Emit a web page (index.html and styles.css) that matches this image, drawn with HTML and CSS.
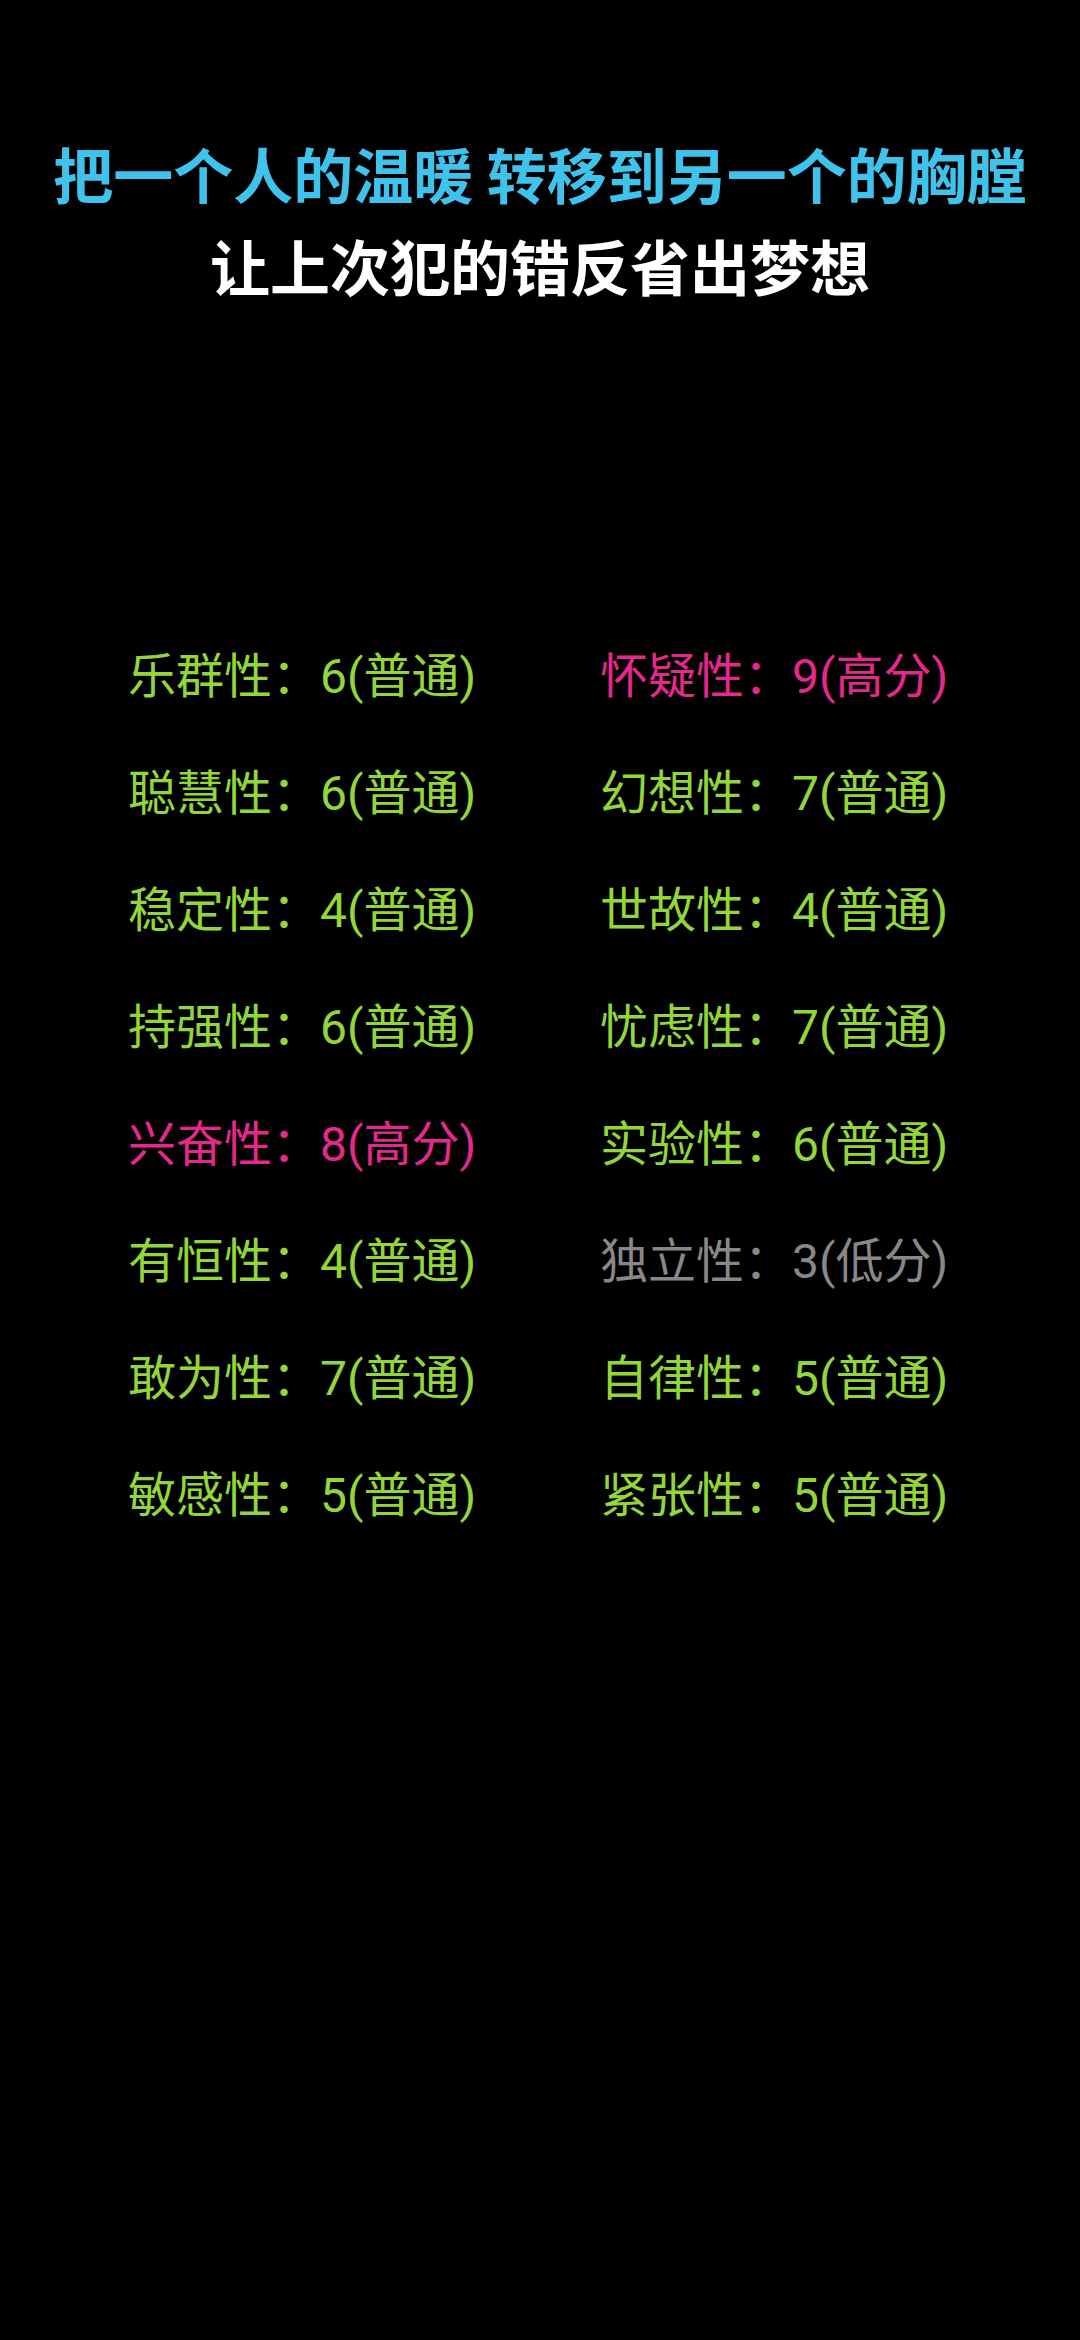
FILE: index.html
```
<!DOCTYPE html>
<html lang="zh-CN">
<head>
<meta charset="utf-8">
<link rel="stylesheet" href="styles.css">
</head>
<body>
<div class="page">
  <header class="title">
    <div class="line cyan">把一个人的温暖 转移到另一个的胸膛</div>
    <div class="line white">让上次犯的错反省出梦想</div>
  </header>
  <section class="traits">
    <div class="trait normal">乐群性：6(普通)</div>
    <div class="trait high">怀疑性：9(高分)</div>
    <div class="trait normal">聪慧性：6(普通)</div>
    <div class="trait normal">幻想性：7(普通)</div>
    <div class="trait normal">稳定性：4(普通)</div>
    <div class="trait normal">世故性：4(普通)</div>
    <div class="trait normal">持强性：6(普通)</div>
    <div class="trait normal">忧虑性：7(普通)</div>
    <div class="trait high">兴奋性：8(高分)</div>
    <div class="trait normal">实验性：6(普通)</div>
    <div class="trait normal">有恒性：4(普通)</div>
    <div class="trait low">独立性：3(低分)</div>
    <div class="trait normal">敢为性：7(普通)</div>
    <div class="trait normal">自律性：5(普通)</div>
    <div class="trait normal">敏感性：5(普通)</div>
    <div class="trait normal">紧张性：5(普通)</div>
  </section>
</div>
</body>
</html>
```
FILE: styles.css
```
html, body {
  margin: 0;
  padding: 0;
  background: #000;
}
body {
  width: 1080px;
  height: 2340px;
  font-family: "Noto Sans CJK SC", "Noto Sans", sans-serif;
}
.page {
  display: flex;
  flex-direction: column;
}
.title {
  padding-top: 127px;
  text-align: center;
  font-size: 60px;
  font-weight: 700;
  line-height: 92px;
}
.cyan { color: #3fc2ec; }
.white { color: #ffffff; }
.traits {
  margin-top: 302px;
  display: grid;
  grid-template-columns: 472px 1fr;
  grid-auto-rows: 117px;
  padding-left: 128px;
}
.trait {
  display: flex;
  align-items: center;
  font-family: "Roboto", "Noto Sans CJK SC", sans-serif;
  font-size: 48px;
  white-space: nowrap;
}
.normal { color: #92d63a; }
.high { color: #e5288d; }
.low { color: #888888; }
```
